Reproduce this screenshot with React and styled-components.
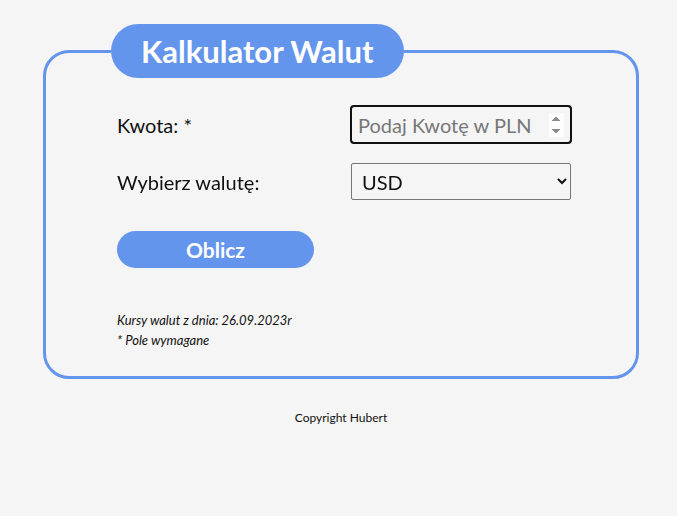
import React from 'react'
import styled, { createGlobalStyle } from 'styled-components'

const GlobalStyle = createGlobalStyle`
  html, body {
    margin: 0;
    background: #f5f5f5;
    font-family: Lato, "Liberation Sans", sans-serif;
    color: #111;
  }
`

const Page = styled.div`
  width: 596px;
  margin: 0 auto;
  padding: 24px 0 0 5px;
`

const Form = styled.fieldset`
  margin: 0;
  padding: 0 0 26px 71px;
  border: 3px solid #6495ed;
  border-radius: 26px;
`

const Title = styled.legend`
  margin-left: -6px;
  padding: 0 30px;
  height: 54px;
  line-height: 54px;
  border-radius: 27px;
  background: #6495ed;
  color: #fff;
  font-size: 31px;
  font-weight: 700;
`

const Grid = styled.div`
  display: grid;
  grid-template-columns: 234px 220px;
  row-gap: 20px;
  align-items: center;
  margin-top: 28px;
`

const Label = styled.label`
  font-size: 20px;
`

const Field = styled.input`
  box-sizing: border-box;
  width: 220px;
  height: 37px;
  padding: 0 6px;
  font-family: inherit;
  font-size: 20px;
  border: 1px solid #767676;
  border-radius: 3px;
  background: #f5f5f5;
  &:focus {
    outline: 2px solid #101010;
    outline-offset: -1px;
  }
  &::placeholder {
    color: #777;
  }
`

const Select = styled.select`
  box-sizing: border-box;
  width: 220px;
  height: 37px;
  padding: 0 6px;
  font-family: inherit;
  font-size: 20px;
  color: #111;
  border: 1px solid #767676;
  border-radius: 2px;
  background: #f5f5f5;
`

const Button = styled.button`
  display: block;
  width: 197px;
  height: 37px;
  margin-top: 31px;
  border: none;
  border-radius: 19px;
  background: #6495ed;
  color: #fff;
  font-family: inherit;
  font-size: 21px;
  font-weight: 700;
`

const Notes = styled.div`
  margin-top: 42px;
  font-size: 13px;
  font-style: italic;
  line-height: 20px;
`

const Footer = styled.footer`
  margin-top: 31px;
  text-align: center;
  font-size: 12px;
`

export default function App() {
  return (
    <>
      <GlobalStyle />
      <Page>
        <Form>
          <Title>Kalkulator Walut</Title>
          <Grid>
            <Label htmlFor="kwota">Kwota: *</Label>
            <Field id="kwota" type="number" placeholder="Podaj Kwotę w PLN" autoFocus />
            <Label htmlFor="waluta">Wybierz walutę:</Label>
            <Select id="waluta" defaultValue="USD">
              <option>USD</option>
              <option>EUR</option>
              <option>GBP</option>
            </Select>
          </Grid>
          <Button type="button">Oblicz</Button>
          <Notes>
            Kursy walut z dnia: 26.09.2023r
            <br />
            * Pole wymagane
          </Notes>
        </Form>
        <Footer>Copyright Hubert</Footer>
      </Page>
    </>
  )
}
